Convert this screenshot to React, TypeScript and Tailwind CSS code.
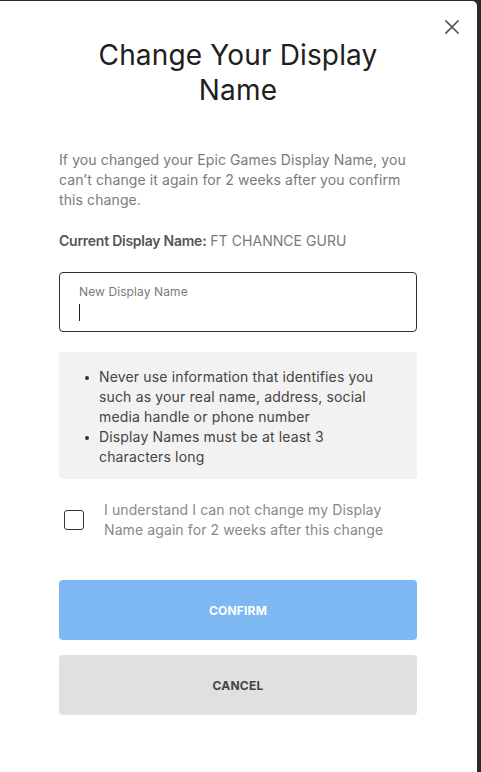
import React from "react";

export default function App() {
  return (
    <div
      className="w-[481px] h-[772px] bg-[#2a2a2a] pt-[1px] pr-[4px] flex overflow-hidden"
      style={{ fontFamily: "Inter, 'Noto Sans', sans-serif" }}
    >
      <div className="relative flex-1 bg-white rounded-tr-[5px] pl-[59px] pr-[60px] pt-[37px]">
        <button className="absolute right-[18px] top-[19px] w-[14px] h-[14px] text-[#555]" aria-label="Close">
          <svg viewBox="0 0 14 14" width="14" height="14" fill="none" stroke="currentColor" strokeWidth="1.7" strokeLinecap="square">
            <path d="M1 1L13 13M13 1L1 13" />
          </svg>
        </button>

        <h1 className="text-[28px] leading-[35px] text-center text-[#202020] font-normal tracking-[0.15px] px-[30px]">
          Change Your Display Name
        </h1>

        <p className="mt-[42px] text-[14px] leading-[20px] tracking-[0.1px] text-[#7a7a7a]">
          If you changed your Epic Games Display Name, you can’t change it again for 2 weeks after you confirm this change.
        </p>

        <p className="mt-[21px] text-[14px] leading-[20px] text-[#7a7a7a]">
          <span className="font-semibold text-[#555] tracking-[-0.25px]">Current Display Name:</span>{" "}
          <span className="tracking-[0.05px]">FT CHANNCE GURU</span>
        </p>

        <div className="mt-[21px] h-[60px] border border-[#2e2e2e] rounded-[4px] pl-[19px] pt-[11px]">
          <div className="text-[12px] leading-[16px] tracking-[0.1px] text-[#7a7a7a]">New Display Name</div>
          <div className="mt-[4px] w-[1px] h-[17px] bg-[#222]" />
        </div>

        <div className="mt-[20px] bg-[#f2f2f2] rounded-[4px] pl-[26px] pr-[28px] pt-[15px] pb-[12px]">
          <ul className="text-[14px] leading-[20px] tracking-[0.15px] text-[#444]">
            <li className="flex">
              <span className="w-[14px] shrink-0 flex pt-[9px]">
                <span className="w-[4px] h-[4px] rounded-full bg-[#333]" />
              </span>
              <span>Never use information that identifies you such as your real name, address, social media handle or phone number</span>
            </li>
            <li className="flex">
              <span className="w-[14px] shrink-0 flex pt-[9px]">
                <span className="w-[4px] h-[4px] rounded-full bg-[#333]" />
              </span>
              <span>Display Names must be at least 3 characters long</span>
            </li>
          </ul>
        </div>

        <label className="mt-[21px] flex items-center pl-[5px]">
          <span className="w-[20px] h-[20px] shrink-0 border border-[#333] rounded-[3px] bg-white" />
          <span className="ml-[20px] text-[14px] leading-[20px] tracking-[0.1px] text-[#888]">
            I understand I can not change my Display Name again for 2 weeks after this change
          </span>
        </label>

        <button className="mt-[40px] w-full h-[60px] rounded-[4px] bg-[#7db8f2] text-white text-[12px] font-bold tracking-[0.2px] pt-[1px]">
          CONFIRM
        </button>
        <button className="mt-[15px] w-full h-[60px] rounded-[4px] bg-[#e0e0e0] text-[#444] text-[12px] font-bold tracking-[0.2px] pt-[1px]">
          CANCEL
        </button>
      </div>
    </div>
  );
}
